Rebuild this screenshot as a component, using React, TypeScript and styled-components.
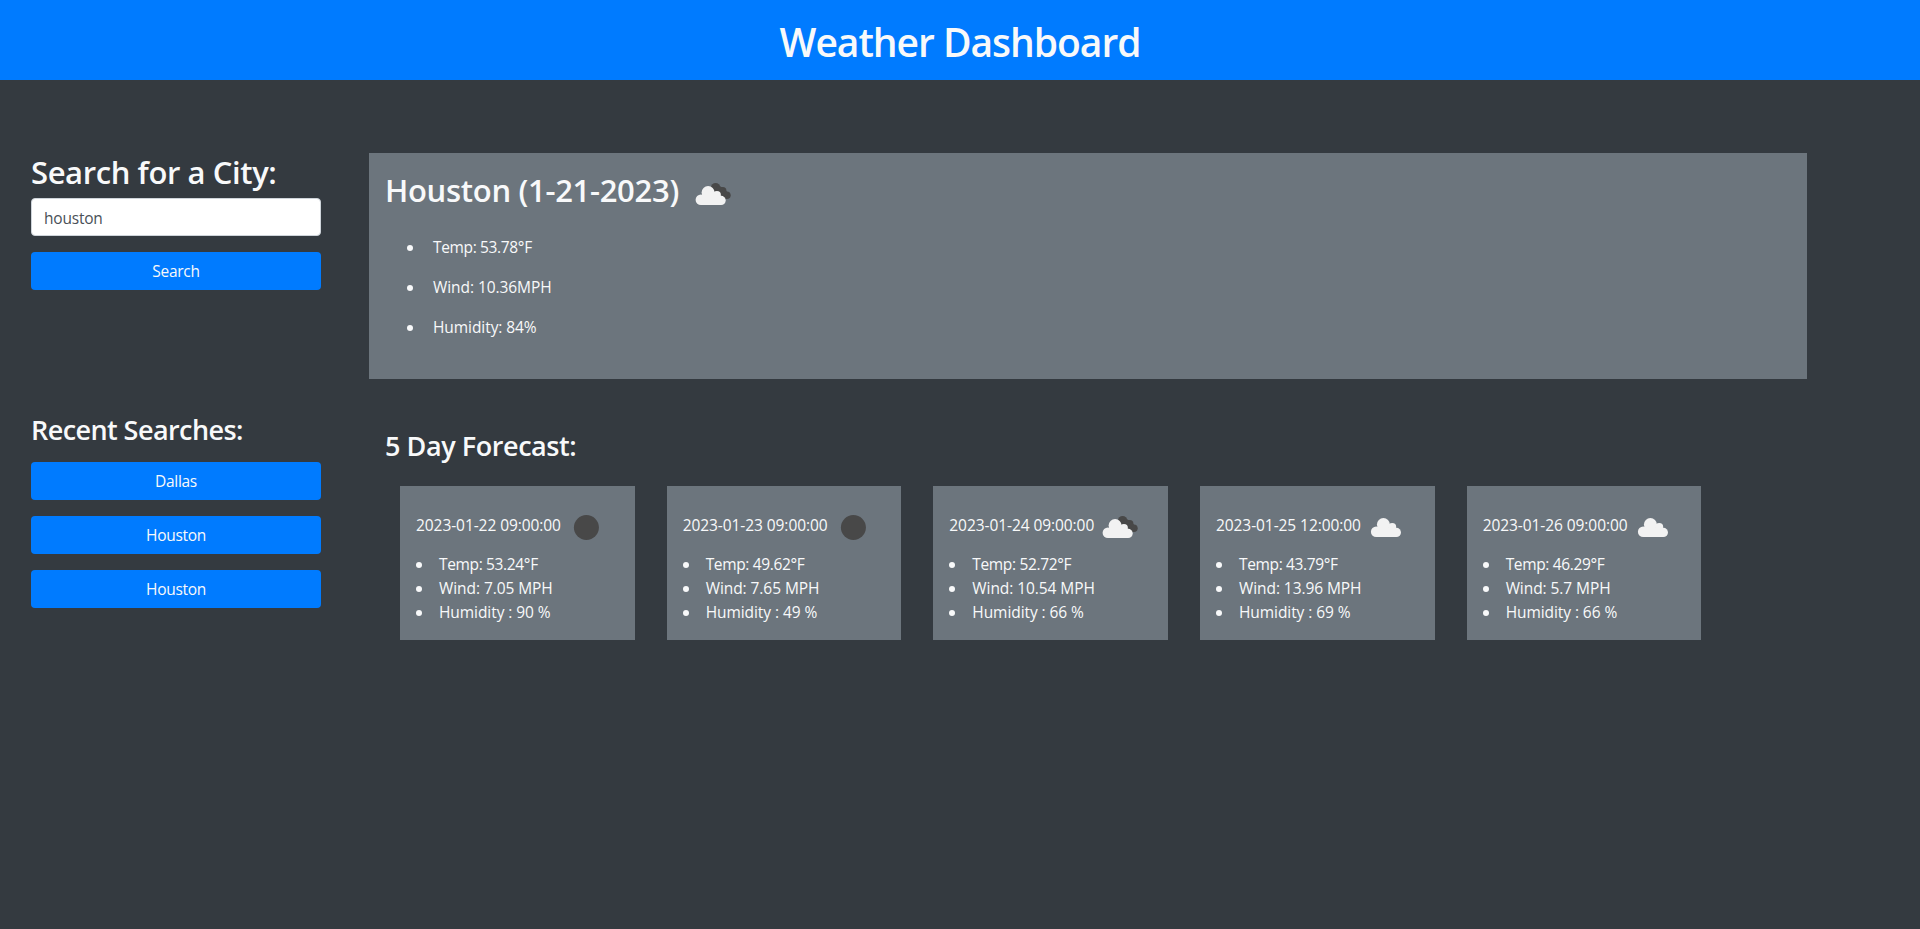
import React from 'react';
import styled, { createGlobalStyle } from 'styled-components';

const GlobalStyle = createGlobalStyle`
  *, *::before, *::after { box-sizing: border-box; }
  html, body { margin: 0; padding: 0; background: #343a40; }
  body {
    min-height: 100vh;
    font-family: 'Segoe UI', 'Open Sans', 'Noto Sans', sans-serif;
    font-size: 15.5px;
    line-height: 24px;
    letter-spacing: -0.07px;
    color: #f8f9fa;
  }
  h1, h2, h3, p, ul { margin: 0; padding: 0; font-weight: inherit; }
`;

const Header = styled.header`
  height: 80px;
  padding-top: 18px;
  background: #007bff;
  text-align: center;
`;

const Title = styled.h1`
  font-size: 39px;
  line-height: 48px;
  font-weight: 600;
  letter-spacing: -1.03px;
`;

const Layout = styled.main`
  display: grid;
  grid-template-columns: 290px 1438px;
  column-gap: 48px;
  padding: 73px 0 0 31px;
`;

const Sidebar = styled.aside`
  display: flex;
  flex-direction: column;
`;

const Heading = styled.h2<{ $spacing?: string }>`
  font-size: 31px;
  line-height: 38px;
  font-weight: 600;
  white-space: nowrap;
  letter-spacing: ${({ $spacing }) => $spacing ?? '0'};
`;

const Subheading = styled.h3<{ $spacing?: string }>`
  font-size: 27px;
  line-height: 34px;
  font-weight: 600;
  white-space: nowrap;
  letter-spacing: ${({ $spacing }) => $spacing ?? '0'};
`;

const SearchForm = styled.form`
  display: flex;
  flex-direction: column;
  height: 260px;
`;

const CityInput = styled.input`
  height: 38px;
  margin: 7px 0 16px;
  padding: 7px 12px 5px;
  border: 1px solid #ced4da;
  border-radius: 4px;
  background: #fff;
  color: #495057;
  font: inherit;
  letter-spacing: -0.2px;
  outline: none;
`;

const Button = styled.button`
  height: 38px;
  padding: 0 12px 1px;
  border: 0;
  border-radius: 4px;
  background: #007bff;
  color: #f8f9fa;
  font: inherit;
  letter-spacing: -0.3px;
`;

const Recent = styled.div`
  display: flex;
  flex-direction: column;
  gap: 16px;
  margin-top: 15px;
`;

const Content = styled.div`
  display: flex;
  flex-direction: column;
`;

const Current = styled.section`
  height: 226px;
  padding: 16px;
  background: #6c757d;
`;

const CurrentHead = styled.div`
  display: flex;
  height: 50px;
`;

const Stats = styled.ul<{ $roomy?: boolean }>`
  list-style: none;
  padding-top: ${({ $roomy }) => ($roomy ? '8px' : '0')};
  padding-left: ${({ $roomy }) => ($roomy ? '22px' : '0')};
`;

const Stat = styled.li<{ $roomy?: boolean }>`
  display: flex;
  align-items: center;
  gap: ${({ $roomy }) => ($roomy ? '20px' : '17px')};
  height: ${({ $roomy }) => ($roomy ? '40px' : '24px')};
  white-space: nowrap;

  &:first-child {
    letter-spacing: -0.35px;
  }

  &::before {
    content: '';
    width: 6px;
    height: 6px;
    margin-top: 1px;
    border-radius: 50%;
    background: currentColor;
  }
`;

const Forecast = styled.section`
  padding: 50px 16px 0;
`;

const Days = styled.div`
  display: flex;
  gap: 32px;
  padding: 23px 0 0 15px;
`;

const Day = styled.article`
  width: 234.67px;
  height: 154px;
  padding: 16px;
  background: #6c757d;
`;

const DayHead = styled.div`
  display: flex;
  height: 50px;
  line-height: 46px;
  white-space: nowrap;
`;

const DateText = styled.span`
  width: 145.33px;
`;

const HeadingSlot = styled.div`
  width: 303px;
  padding-top: 2px;
`;

const Icon = styled.svg`
  flex: none;
  width: 50px;
  height: 50px;
`;

const Cloud = () => (
  <g fill="#f2f2f2">
    <circle cx="22.4" cy="22.5" r="6.5" />
    <circle cx="31.2" cy="25" r="4" />
    <circle cx="15.2" cy="29.7" r="5.3" />
    <circle cx="35.4" cy="30.4" r="4.6" />
    <path d="M15.2 35 V26 H31 L35.4 28 V35 Z" />
  </g>
);

type Sky = 'clear' | 'cloud' | 'broken';

const WeatherIcon = ({ sky }: { sky: Sky }) => (
  <Icon viewBox="0 0 50 50" aria-hidden="true">
    {sky === 'clear' && <circle cx="25.4" cy="25.5" r="12.5" fill="#484848" />}
    {sky === 'cloud' && <Cloud />}
    {sky === 'broken' && (
      <>
        <g fill="#484848">
          <circle cx="27.6" cy="18.5" r="4.6" />
          <circle cx="34.8" cy="21.5" r="3.6" />
          <circle cx="38.9" cy="26.3" r="3.8" />
          <path d="M26 22 L30 16 L36.8 20 L40.8 25 L38.3 30 Z" />
        </g>
        <g transform="translate(-2.3 1)">
          <Cloud />
        </g>
      </>
    )}
  </Icon>
);

const searches = ['Dallas', 'Houston', 'Houston'];

const days: { date: string; sky: Sky; stats: string[] }[] = [
  { date: '2023-01-22 09:00:00', sky: 'clear', stats: ['Temp: 53.24°F', 'Wind: 7.05 MPH', 'Humidity : 90 %'] },
  { date: '2023-01-23 09:00:00', sky: 'clear', stats: ['Temp: 49.62°F', 'Wind: 7.65 MPH', 'Humidity : 49 %'] },
  { date: '2023-01-24 09:00:00', sky: 'broken', stats: ['Temp: 52.72°F', 'Wind: 10.54 MPH', 'Humidity : 66 %'] },
  { date: '2023-01-25 12:00:00', sky: 'cloud', stats: ['Temp: 43.79°F', 'Wind: 13.96 MPH', 'Humidity : 69 %'] },
  { date: '2023-01-26 09:00:00', sky: 'cloud', stats: ['Temp: 46.29°F', 'Wind: 5.7 MPH', 'Humidity : 66 %'] },
];

export default function App() {
  return (
    <>
      <GlobalStyle />
      <Header>
        <Title>Weather Dashboard</Title>
      </Header>
      <Layout>
        <Sidebar>
          <SearchForm onSubmit={(e) => e.preventDefault()}>
            <Heading $spacing="-0.4px">Search for a City:</Heading>
            <CityInput defaultValue="houston" />
            <Button>Search</Button>
          </SearchForm>
          <Subheading $spacing="-0.57px">Recent Searches:</Subheading>
          <Recent>
            {searches.map((city, i) => (
              <Button key={i}>{city}</Button>
            ))}
          </Recent>
        </Sidebar>
        <Content>
          <Current>
            <CurrentHead>
              <HeadingSlot>
                <Heading $spacing="-0.3px">Houston (1-21-2023)</Heading>
              </HeadingSlot>
              <WeatherIcon sky="broken" />
            </CurrentHead>
            <Stats $roomy>
              {['Temp: 53.78°F', 'Wind: 10.36MPH', 'Humidity: 84%'].map((s) => (
                <Stat $roomy key={s}>{s}</Stat>
              ))}
            </Stats>
          </Current>
          <Forecast>
            <Subheading $spacing="-0.43px">5 Day Forecast:</Subheading>
            <Days>
              {days.map((d) => (
                <Day key={d.date}>
                  <DayHead>
                    <DateText>{d.date}</DateText>
                    <WeatherIcon sky={d.sky} />
                  </DayHead>
                  <Stats>
                    {d.stats.map((s) => (
                      <Stat key={s}>{s}</Stat>
                    ))}
                  </Stats>
                </Day>
              ))}
            </Days>
          </Forecast>
        </Content>
      </Layout>
    </>
  );
}
